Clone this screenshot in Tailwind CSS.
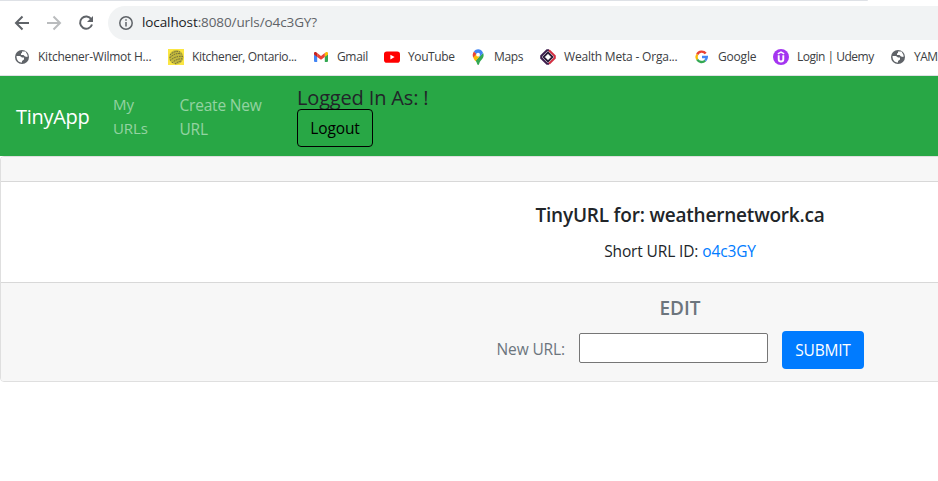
<!DOCTYPE html>
<html lang="en">
<head>
<meta charset="utf-8">
<title>TinyApp</title>
<script src="https://cdn.jsdelivr.net/npm/@tailwindcss/browser@4"></script>
</head>
<body class="h-[481px] w-[938px] overflow-hidden bg-white font-['Open_Sans','Noto_Sans',sans-serif] text-[#212529]">
<header class="h-[76px] overflow-hidden border-b border-[#dfe1e5]">
  <div class="h-px w-[868px] rounded-br bg-[#dee1e6]"></div>
  <div class="flex h-[42px] items-center pl-[14px] pt-[1px]">
    <svg class="mr-4 size-4 shrink-0" viewBox="0 0 16 16" fill="none" stroke="#5f6368" stroke-width="2"><path d="M15 8H2.500M8.500 1.500 2 8l6.500 6.500"/></svg>
    <svg class="mr-4 size-4 shrink-0" viewBox="0 0 16 16" fill="none" stroke="#babcbe" stroke-width="2"><path d="M1 8h12.500M7.500 1.500 14 8l-6.500 6.500"/></svg>
    <svg class="mr-[14px] size-4 shrink-0" viewBox="0 0 16 16" fill="none" stroke="#5f6368" stroke-width="2"><path d="M13.300 4.300A6.100 6.100 0 1 0 14 9.500"/><path d="M15 1v6H9z" fill="#5f6368" stroke="none"/></svg>
    <div class="flex h-[34px] grow items-center rounded-l-full bg-[#f1f3f4] pl-[11px]">
      <svg class="mr-[9px] size-[14px]" viewBox="0 0 14 14" fill="none" stroke="#5f6368" stroke-width="1.500"><circle cx="7" cy="7" r="6.200"/><path d="M7 6v4.500M7 3.300v1.500"/></svg>
      <span class="whitespace-nowrap text-[13.500px] tracking-[-0.1px] text-[#5f6368]"><span class="text-[#202124]">localhost</span>:8080/urls/o4c3GY?</span>
    </div>
  </div>
  <nav class="flex h-[27px] items-center whitespace-nowrap pl-[14px] text-[12px] tracking-[-0.200px] text-[#3c4043]">
    <a class="flex w-[154px] shrink-0 items-center gap-2"><svg class="size-4" viewBox="0 0 16 16"><circle cx="8" cy="8" r="7" fill="#5f6368"/><path d="M2.500 7h3.500l2 1.500h2v2L8 12v1.500C5 13.500 2.500 11.500 2.500 7zM8 2.500h3.500L13.500 6v2L11 7.500 9.500 6H7V4.500l1-.5z" fill="#fff"/></svg><span class="tracking-[-0.250px]">Kitchener-Wilmot H...</span></a>
    <a class="flex w-[145px] shrink-0 items-center gap-2"><svg class="size-4" viewBox="0 0 16 16"><path fill="#fbe643" d="M0 0h16v16H0z"/><circle cx="8.200" cy="8.200" r="7.200" fill="#c2b83d"/><g fill="none" stroke="#64613a" stroke-width="1" stroke-dasharray="1.500 1"><path d="M2 6q5-5 10-3M1.500 9q6-6 12-4M2 11.500q6-5 13-4M4 14q5-5 11-4M7 15q4-3 7-3"/></g></svg><span class="tracking-[-0.350px]">Kitchener, Ontario...</span></a>
    <a class="flex w-[71px] shrink-0 items-center gap-2"><svg class="size-4" viewBox="0 0 16 16"><path fill="#4285f4" d="M1 5l3.200 2.300V13H2a1 1 0 0 1-1-1z"/><path fill="#34a853" d="M15 5l-3.200 2.300V13H14a1 1 0 0 0 1-1z"/><path fill="#fbbc04" d="M11.800 4l1-.7C13.700 2.600 15 3.300 15 4.300V5.500l-3.200 2.400z"/><path fill="#ea4335" d="M4.200 4L8 6.900 11.800 4v3.900L8 10.700 4.200 7.900z"/><path fill="#c5221f" d="M1 4.300C1 3.300 2.300 2.600 3.200 3.300l1 .7v3.900L1 5.500z"/></svg><span class="tracking-[-0.350px]">Gmail</span></a>
    <a class="flex w-[86px] shrink-0 items-center gap-2"><svg class="size-4" viewBox="0 0 16 16"><rect y="2.500" width="16" height="11.200" rx="2.800" fill="#f00"/><path fill="#fff" d="M6.400 5.700v4.800L10.600 8.100z"/></svg><span class="tracking-[-0.400px]">YouTube</span></a>
    <a class="flex w-[70px] shrink-0 items-center gap-2"><svg class="size-4" viewBox="0 0 16 16"><path fill="#34a853" d="M13.100 4c1 2 .5 4.100-1 6-1.400 1.800-2.300 2.600-3 5-.4 1.300-1.500 1.200-1.900 0-.4-1.500-1-2.600-1.800-3.600z"/><path fill="#fbbc04" d="M3.200 8.300 6.400 4.500l3.300 2.800-4.300 5C4.400 11 3.600 9.700 3.200 8.300z"/><path fill="#ea4335" d="M3.900 2.400l2.800 2.400-3.500 3.800C2.300 6.400 2.600 4.100 3.900 2.400z"/><path fill="#4285f4" d="M3.900 2.400C6.400-.5 11-.6 13.100 4L9.700 7.700 6.600 5z"/><circle cx="8.100" cy="5.700" r="1.900" fill="#fff"/></svg><span class="tracking-[-0.350px]">Maps</span></a>
    <a class="flex w-[154px] shrink-0 items-center gap-2"><svg class="size-4" viewBox="0 0 16 16" fill="none"><path stroke="#3d1e4d" stroke-width="2" d="M9 1.200H7L1.200 7v2L7 14.800h2"/><path stroke="#d33043" stroke-width="2" d="M9 1.200 14.800 7v2L9 14.800"/><path stroke="#2b1c38" stroke-width="1.800" d="M8 3.500 12.500 8 8 12.500 3.500 8z"/></svg><span>Wealth Meta - Orga...</span></a>
    <a class="flex w-[79px] shrink-0 items-center gap-2"><svg class="size-4" viewBox="0 0 16 16" fill="none" stroke-width="2.400"><path stroke="#ea4335" d="M3.200 5.500A5 5 0 0 1 11.700 4.600"/><path stroke="#fbbc04" d="M3.200 5.500a5 5 0 0 0 0 5"/><path stroke="#34a853" d="M3.200 10.500a5 5 0 0 0 8 1"/><path stroke="#4285f4" d="M8 8h4.800a4.800 4.800 0 0 1-1.600 3.500"/></svg><span>Google</span></a>
    <a class="flex w-[117px] shrink-0 items-center gap-2"><svg class="size-4" viewBox="0 0 16 16" fill="none" stroke="#fff"><circle cx="8" cy="8" r="8" fill="#a435f0" stroke="none"/><path stroke-width="1.300" d="M4.800 4.900 8 3.100l3.200 1.800"/><path stroke-width="1.900" d="M5.700 6.300v3.900a2.300 2.300 0 0 0 4.600 0V6.300"/></svg><span class="tracking-[-0.500px]">Login | Udemy</span></a>
    <a class="flex shrink-0 items-center gap-2"><svg class="size-4" viewBox="0 0 16 16"><circle cx="8" cy="8" r="7" fill="#5f6368"/><path d="M2.500 7h3.500l2 1.500h2v2L8 12v1.500C5 13.500 2.500 11.500 2.500 7zM8 2.500h3.500L13.500 6v2L11 7.500 9.500 6H7V4.500l1-.5z" fill="#fff"/></svg><span class="tracking-[-0.500px]">YAM</span></a>
  </nav>
</header>
<nav class="flex h-20 items-center bg-[#28a745] pl-4">
  <a class="mt-[2px] w-[97px] text-[20px] leading-[30px] tracking-[-0.300px] text-white">TinyApp</a>
  <a class="w-[66.500px] text-[15px] leading-6 tracking-[-0.100px] text-white/50">My<br>URLs</a>
  <a class="mt-[2px] w-[117.500px] text-[15.500px] leading-6 tracking-[-0.200px] text-white/50">Create New<br>URL</a>
  <div class="flex flex-col items-start">
    <span class="-mt-[1px] h-6 pt-px text-[20px] leading-6 tracking-[-0.160px]">Logged In As: !</span>
    <button class="h-[38px] w-[76px] rounded border border-black pt-[3px] text-[15.500px] tracking-[-0.100px] text-black">Logout</button>
  </div>
</nav>
<div class="overflow-hidden">
<main class="h-[226px] w-[1360px] overflow-hidden rounded border border-[#dfdfdf] text-center">
  <div class="h-[25px] border-b border-[#d8d8d8] bg-[#f7f7f7]"></div>
  <section class="h-[100px] pt-[21px]">
    <h5 class="mb-3 text-[19px] font-semibold leading-6 tracking-[-0.200px]">TinyURL for: weathernetwork.ca</h5>
    <p class="text-[15.500px] leading-6 tracking-[-0.130px]">Short URL ID: <a class="text-[#007bff]">o4c3GY</a></p>
  </section>
  <footer class="h-[99px] border-t border-[#d8d8d8] bg-[#f7f7f7] pt-[13px] text-[#6c757d]">
    <h5 class="text-[19px] font-semibold leading-6">EDIT</h5>
    <form class="ml-[495.500px] mt-[11px] flex items-center">
      <label class="-mt-[2px] w-[82.500px] text-left text-[15.500px] leading-6 tracking-[-0.120px]">New URL:</label>
      <input type="text" class="-mt-[5px] mr-[14px] h-[30px] w-[189px] rounded-[2px] border border-[#767676] bg-white">
      <button type="button" class="h-[38px] w-[82px] rounded bg-[#007bff] pt-[2px] text-[15.500px] tracking-[-0.200px] text-white">SUBMIT</button>
    </form>
  </footer>
</main>
</div>
</body>
</html>
